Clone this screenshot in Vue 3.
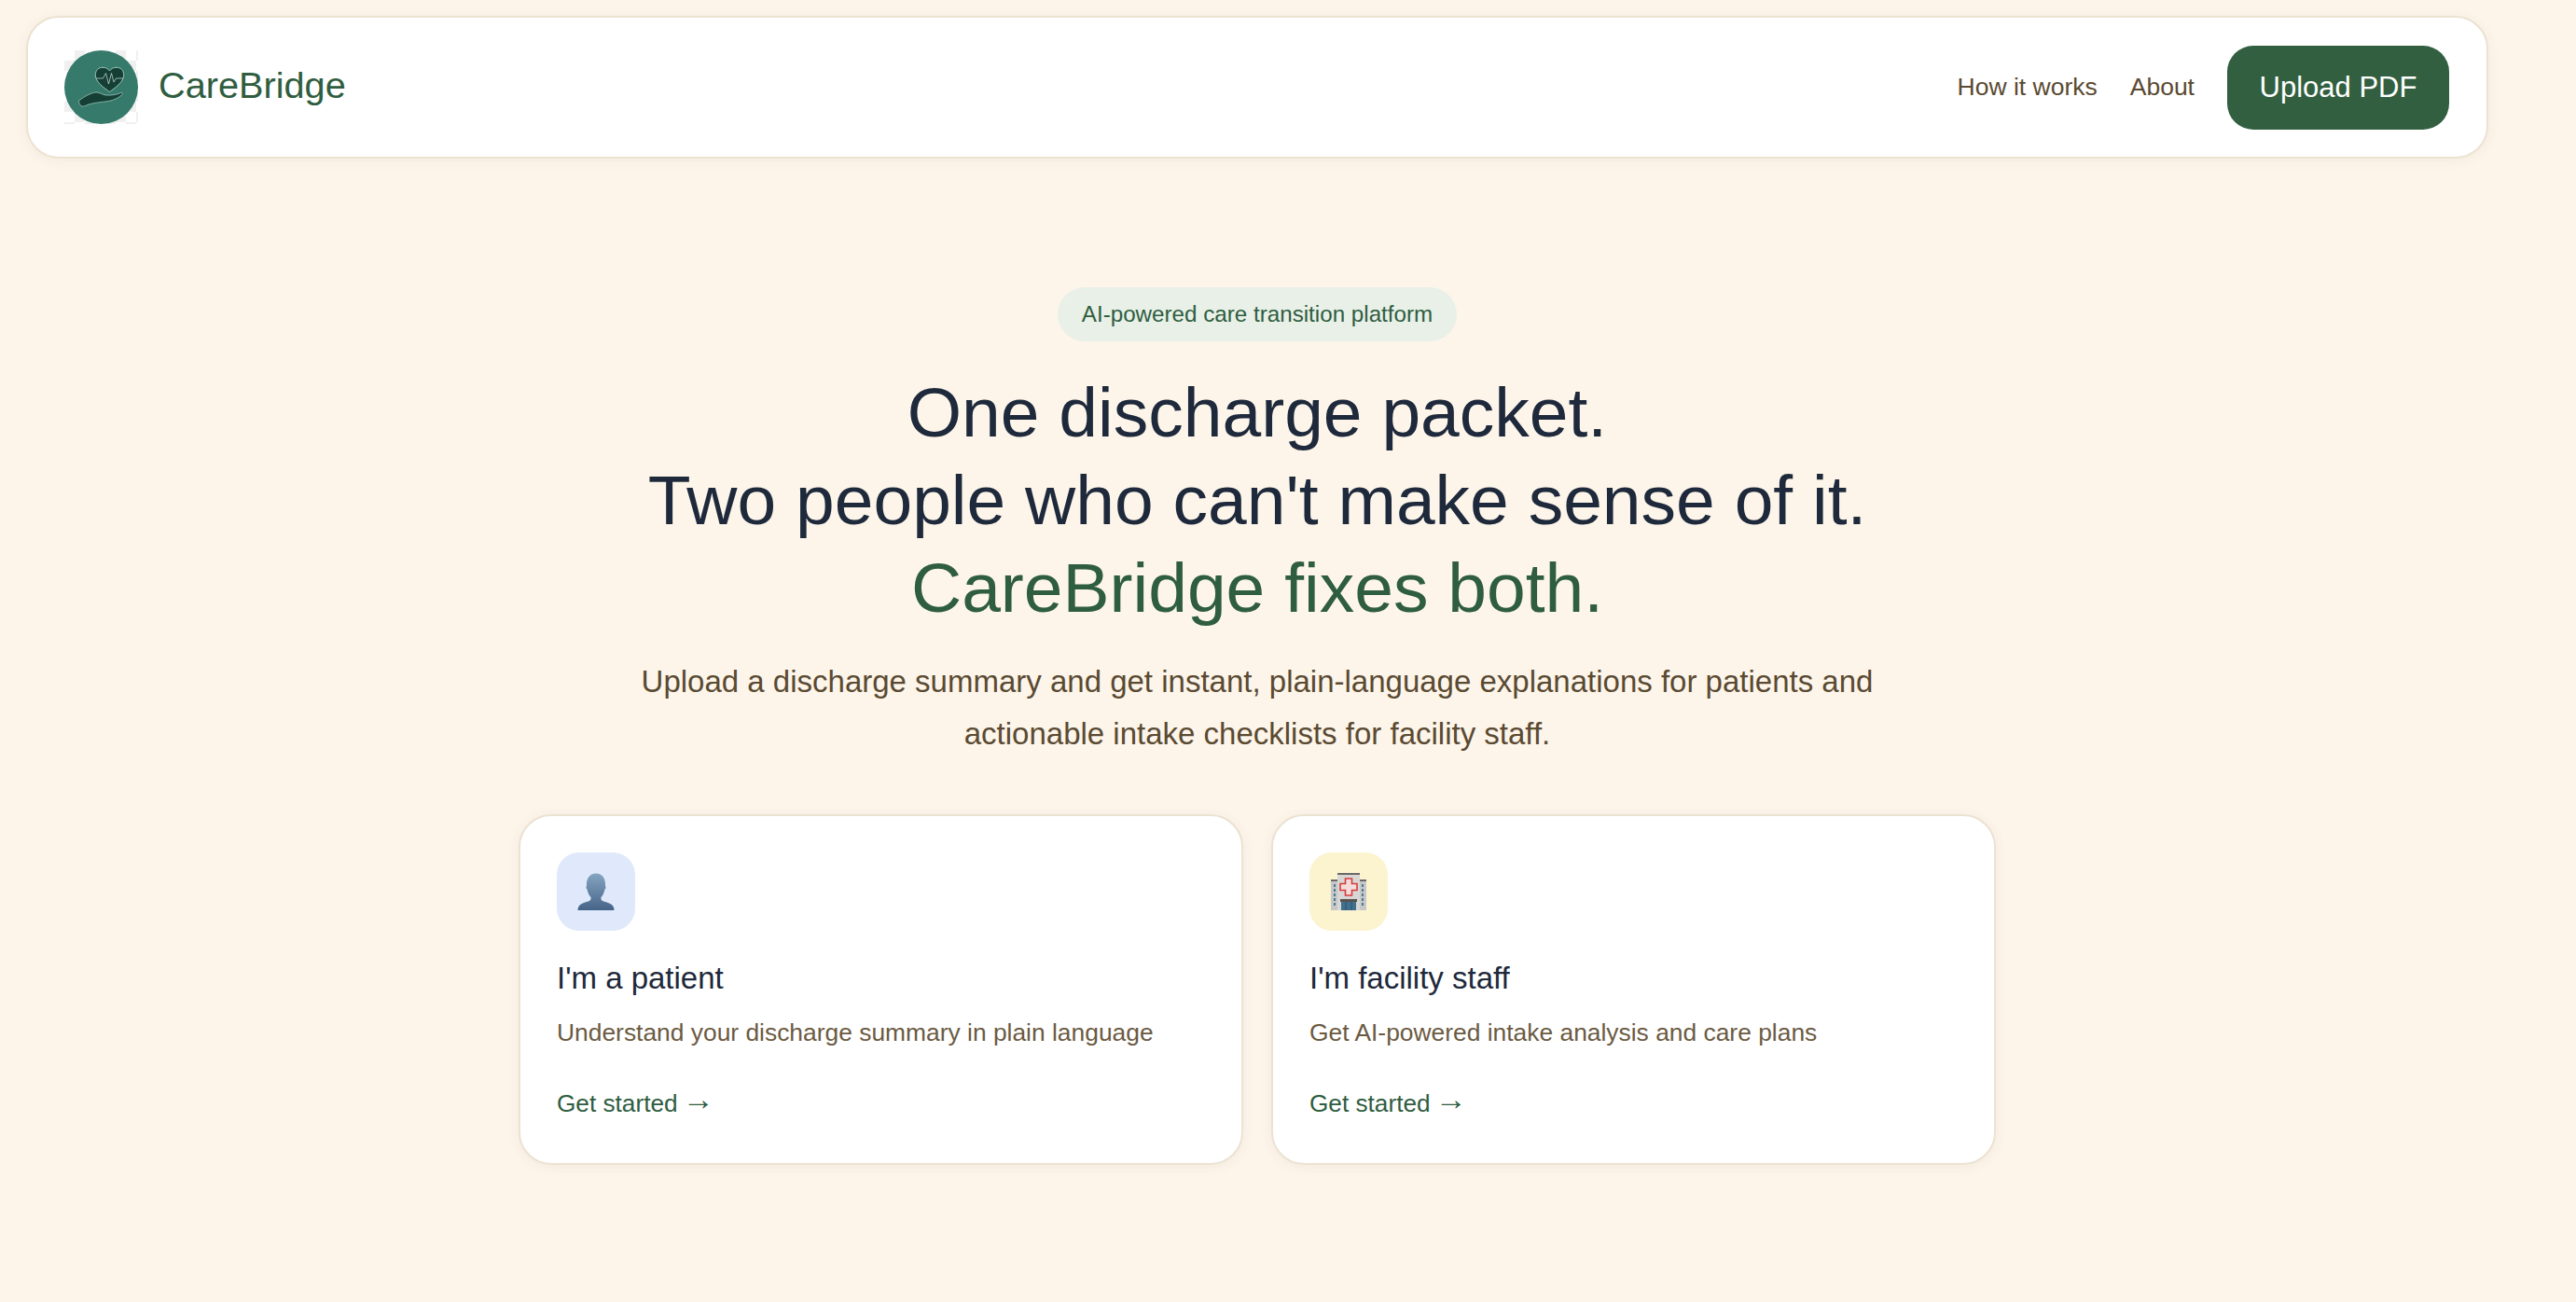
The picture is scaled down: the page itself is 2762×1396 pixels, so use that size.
<template>
  <div class="page">
    <nav class="navbar">
      <div class="brand">
        <div class="logo">
          <svg viewBox="0 0 79 79" width="79" height="79">
            <circle cx="39.5" cy="39.5" r="39.5" fill="#367a6b" />
            <path
              d="M48.5 44.5 C43 40.5 33.3 34 33.3 26.5 C33.3 21 37 18.3 41 18.3 C44.5 18.3 47 19.8 48.5 22 C50 19.8 52.5 18.3 56 18.3 C60 18.3 63.7 21 63.7 26.5 C63.7 34 54 40.5 48.5 44.5 Z"
              fill="#153f35"
              stroke="#a9cfc4"
              stroke-width="0.9"
            />
            <path
              d="M34 30 H41.5 L44.5 24.5 L47.5 36 L50.5 24.5 L53 34 L55.5 30 H63"
              fill="none"
              stroke="#cfe5de"
              stroke-width="0.7"
            />
            <path
              d="M16 53.5 C21 50 28 45.5 34 45 C38 45 41 47.5 44 48 C50 48.5 56 47.5 61 45.5 C62.5 45 62.8 46.5 62 47.5 C58 51 53 53.5 47 54.5 C40 55.5 32 56 26 58 C23 59 21 60.5 19 60 C16 59 15 55 16 53.5 Z"
              fill="#153f35"
              stroke="#a9cfc4"
              stroke-width="0.7"
            />
          </svg>
        </div>
        <span class="brand-name">CareBridge</span>
      </div>
      <div class="nav-links">
        <a class="nav-link">How it works</a>
        <a class="nav-link">About</a>
        <button class="upload-btn">Upload PDF</button>
      </div>
    </nav>

    <main class="hero">
      <span class="badge">AI-powered care transition platform</span>
      <h1>
        One discharge packet.<br />
        Two people who can't make sense of it.<br />
        <span class="accent">CareBridge fixes both.</span>
      </h1>
      <p class="subtitle">
        Upload a discharge summary and get instant, plain-language explanations
        for patients and<br />actionable intake checklists for facility staff.
      </p>

      <div class="cards">
        <div class="card">
          <div class="card-icon blue">
            <svg viewBox="0 0 40 40" width="40" height="40">
              <defs>
                <linearGradient id="bust" x1="0" y1="0" x2="0" y2="1">
                  <stop offset="0" stop-color="#86a5c1" />
                  <stop offset="1" stop-color="#456488" />
                </linearGradient>
              </defs>
              <path
                d="M0.5 40 C0.5 34 5 32.5 10 31 C14 30 15 28.5 14.5 26 C12 23.5 11 20 10.5 17.5 C9.5 17 9 15 10 14 C9.5 6 13 0.5 20 0.5 C27 0.5 30.5 6 30 14 C31 15 30.5 17 29.5 17.5 C29 20 28 23.5 25.5 26 C25 28.5 26 30 30 31 C35 32.5 39.5 34 39.5 40 Z"
                fill="url(#bust)"
              />
            </svg>
          </div>
          <h3>I'm a patient</h3>
          <p>Understand your discharge summary in plain language</p>
          <a class="card-link">Get started <span class="arrow">→</span></a>
        </div>

        <div class="card">
          <div class="card-icon yellow">
            <svg viewBox="0 0 38 40" width="38" height="40">
              <rect x="0" y="8" width="38" height="32" fill="#c6c8c8" />
              <rect x="0" y="7" width="38" height="2" fill="#6b6a68" />
              <rect x="7" y="0" width="24" height="40" fill="#d8d7d5" />
              <rect x="7" y="0" width="24" height="2" fill="#6b6a68" />
              <g fill="#4f7898">
                <rect x="3" y="12" width="2" height="3" />
                <rect x="3" y="17" width="2" height="3" />
                <rect x="3" y="22" width="2" height="3" />
                <rect x="3" y="27" width="2" height="3" />
                <rect x="3" y="32" width="2" height="3" />
                <rect x="33" y="12" width="2" height="3" />
                <rect x="33" y="17" width="2" height="3" />
                <rect x="33" y="22" width="2" height="3" />
                <rect x="33" y="27" width="2" height="3" />
                <rect x="33" y="32" width="2" height="3" />
              </g>
              <path
                d="M15.5 6 H22.5 V11.5 H28 V18.5 H22.5 V24 H15.5 V18.5 H10 V11.5 H15.5 Z"
                fill="#f3dedc"
                stroke="#d63c3c"
                stroke-width="1.6"
              />
              <rect x="10" y="28" width="18" height="3" fill="#57534f" />
              <rect x="11" y="31" width="16" height="9" fill="#41708f" />
              <path d="M16 31 V40 M22 31 V40" stroke="#2f5068" stroke-width="1" />
            </svg>
          </div>
          <h3>I'm facility staff</h3>
          <p>Get AI-powered intake analysis and care plans</p>
          <a class="card-link">Get started <span class="arrow">→</span></a>
        </div>
      </div>
    </main>
  </div>
</template>

<script setup>
</script>

<style>
html,
body {
  margin: 0;
  background: #fdf5ea;
}
</style>

<style scoped>
.page {
  box-sizing: border-box;
  width: 2696px;
  min-height: 1396px;
  padding: 17px 28px 0;
  font-family: "Liberation Sans", Arial, sans-serif;
}

.navbar {
  box-sizing: border-box;
  height: 153px;
  display: flex;
  align-items: center;
  justify-content: space-between;
  padding: 0 40px 0 39px;
  background: #fff;
  border: 2px solid #ece2d2;
  border-radius: 35px;
  box-shadow: 0 2px 14px rgba(90, 74, 50, 0.06);
}

.brand {
  display: flex;
  align-items: center;
  gap: 22px;
}

.logo {
  width: 79px;
  height: 79px;
  background: repeating-conic-gradient(#f0f0f0 0 25%, #fff 0 50%) 0 0 / 22px 22px;
}

.logo svg {
  display: block;
}

.brand-name {
  font-size: 39.7px;
  line-height: 46px;
  margin-top: -5px;
  color: #2f5d3f;
}

.nav-links {
  display: flex;
  align-items: center;
  gap: 35px;
}

.nav-link {
  font-size: 26.5px;
  color: #5a4a32;
}

.upload-btn {
  width: 238px;
  height: 90px;
  background: #315f40;
  color: #fff;
  border: none;
  border-radius: 28px;
  font-family: inherit;
  font-size: 31px;
}

.hero {
  display: flex;
  flex-direction: column;
  align-items: center;
  padding-top: 138px;
}

.badge {
  box-sizing: border-box;
  height: 58px;
  display: flex;
  align-items: center;
  padding: 0 26px;
  background: #e8f0e8;
  border-radius: 29px;
  font-size: 24.2px;
  color: #2f5d3f;
}

h1 {
  margin: 29px 0 0;
  font-size: 75px;
  line-height: 94px;
  font-weight: 400;
  text-align: center;
  color: #1e293b;
}

.accent {
  color: #2f5d3f;
}

.subtitle {
  margin: 26px 0 0;
  font-size: 33px;
  line-height: 56px;
  text-align: center;
  color: #5a4a32;
}

.cards {
  display: flex;
  gap: 30px;
  margin-top: 58px;
}

.card {
  box-sizing: border-box;
  width: 777px;
  height: 376px;
  padding: 39px;
  background: #fff;
  border: 2px solid #ece2d2;
  border-radius: 35px;
  box-shadow: 0 2px 14px rgba(90, 74, 50, 0.06);
}

.card-icon {
  width: 84px;
  height: 84px;
  display: flex;
  align-items: center;
  justify-content: center;
  border-radius: 24px;
}

.card-icon.blue {
  background: #dfe9fb;
}

.card-icon.yellow {
  background: #fcf3cf;
}

h3 {
  margin: 29px 0 0;
  font-size: 33px;
  line-height: 44px;
  font-weight: 400;
  color: #1e293b;
}

.card p {
  margin: 14px 0 0;
  font-size: 26.4px;
  line-height: 44px;
  color: #6b5a42;
}

.card-link {
  display: block;
  margin-top: 32px;
  font-size: 26.2px;
  line-height: 44px;
  color: #2f5d3f;
}

.arrow {
  display: inline-block;
  margin-left: -2px;
  font-size: 34px;
  line-height: 20px;
  transform: translateY(-2px);
}
</style>
